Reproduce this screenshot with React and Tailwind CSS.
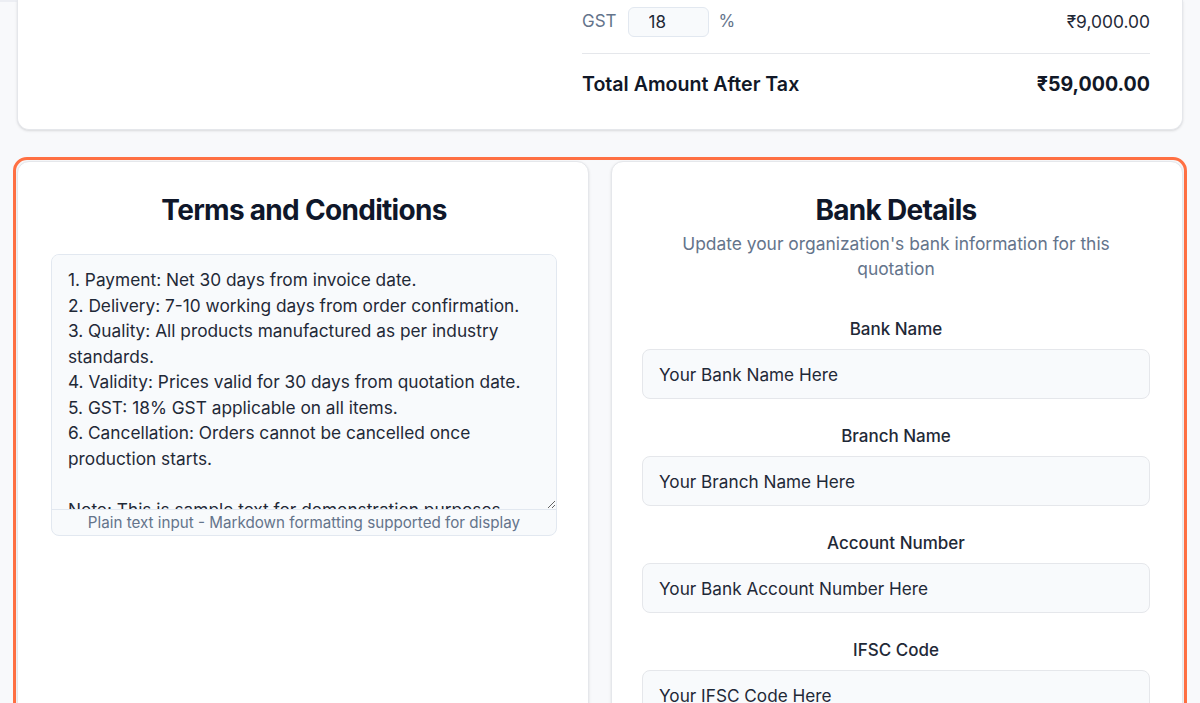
import React from "react";

const termsText = `1. Payment: Net 30 days from invoice date.
2. Delivery: 7-10 working days from order confirmation.
3. Quality: All products manufactured as per industry standards.
4. Validity: Prices valid for 30 days from quotation date.
5. GST: 18% GST applicable on all items.
6. Cancellation: Orders cannot be cancelled once production starts.

Note: This is sample text for demonstration purposes. Please replace with your own terms and conditions.`;

function Field({ label, value }) {
  return (
    <div>
      <div className="text-center text-[17px] leading-6 font-medium text-[#1f2937]">{label}</div>
      <input
        readOnly
        value={value}
        className="mt-2 block h-[50px] w-full rounded-lg border border-[#e5e7eb] bg-[#f8fafc] px-4 text-[17.2px] text-[#1f2937] outline-none"
      />
    </div>
  );
}

export default function App() {
  return (
    <div
      className="min-h-screen overflow-hidden bg-[#f8f9fb] text-[#1f2937]"
      style={{ fontFamily: "Inter, 'Noto Sans', sans-serif" }}
    >
      <div className="h-[2px] w-[1183px] bg-[#eceef3]" />
      <div className="px-[13px]">
        {/* Top totals card */}
        <div className="mx-[4px] -mt-[2px] rounded-b-xl border-x border-b border-[#e5e7eb] bg-white pb-[31px] pt-[7px] pr-[32px] shadow-sm">
          <div className="flex justify-end">
            <div className="w-[568px]">
              <div className="flex items-center justify-between border-b border-[#e5e7eb] pb-4">
                <div className="flex items-center">
                  <span className="text-[17px] text-[#64748b]">GST</span>
                  <input
                    readOnly
                    value="18"
                    className="ml-[11px] h-[30px] w-[81px] rounded-md border border-[#e2e8f0] bg-[#f8fafc] pl-[20px] text-[17px] text-[#1f2937] outline-none"
                  />
                  <span className="ml-[10px] text-[17px] text-[#64748b]">%</span>
                </div>
                <span className="text-[17.4px] text-[#1f2937]">₹9,000.00</span>
              </div>
              <div className="mt-4 flex h-7 items-center justify-between pt-[2px]">
                <span className="text-[19.6px] font-semibold text-[#111827]">Total Amount After Tax</span>
                <span className="text-[19.6px] font-bold text-[#111827]">₹59,000.00</span>
              </div>
            </div>
          </div>
        </div>

        {/* Highlighted section */}
        <div className="mt-[27px] rounded-[14px] border-[3px] border-[#ff7043] p-px">
          <div className="grid grid-cols-2 gap-[22px]">
            {/* Terms card */}
            <div className="h-[620px] rounded-xl border border-[#e5e7eb] bg-white py-8 pl-[33px] pr-[31px] shadow-sm">
              <h2 className="text-center text-[28px] font-bold leading-8 tracking-tight text-[#0f172a]">
                Terms and Conditions
              </h2>
              <div className="mt-[28px] overflow-hidden rounded-lg border border-[#e2e8f0] bg-[#f8fafc]">
                <textarea
                  readOnly
                  defaultValue={termsText}
                  className="block h-[254px] w-full resize-y overflow-hidden bg-[#f8fafc] px-4 py-3 text-[17.3px] leading-[25.5px] text-[#1f2937] outline-none"
                />
                <div className="border-t border-[#e2e8f0] pb-[2px] pt-[3px] text-center text-[15.2px] leading-5 text-[#64748b]">
                  Plain text input - Markdown formatting supported for display
                </div>
              </div>
            </div>

            {/* Bank details card */}
            <div className="h-[620px] rounded-xl border border-[#e5e7eb] bg-white py-8 pl-[30px] pr-[32px] shadow-sm">
              <h2 className="text-center text-[28px] font-bold leading-8 tracking-tight text-[#0f172a]">
                Bank Details
              </h2>
              <p className="mx-auto mt-[5px] max-w-[460px] text-center text-[17.4px] leading-[25px] text-[#64748b]">
                Update your organization's bank information for this quotation
              </p>
              <div className="mt-[36px] flex flex-col gap-[25px]">
                <Field label="Bank Name" value="Your Bank Name Here" />
                <Field label="Branch Name" value="Your Branch Name Here" />
                <Field label="Account Number" value="Your Bank Account Number Here" />
                <Field label="IFSC Code" value="Your IFSC Code Here" />
              </div>
            </div>
          </div>
        </div>
      </div>
    </div>
  );
}
